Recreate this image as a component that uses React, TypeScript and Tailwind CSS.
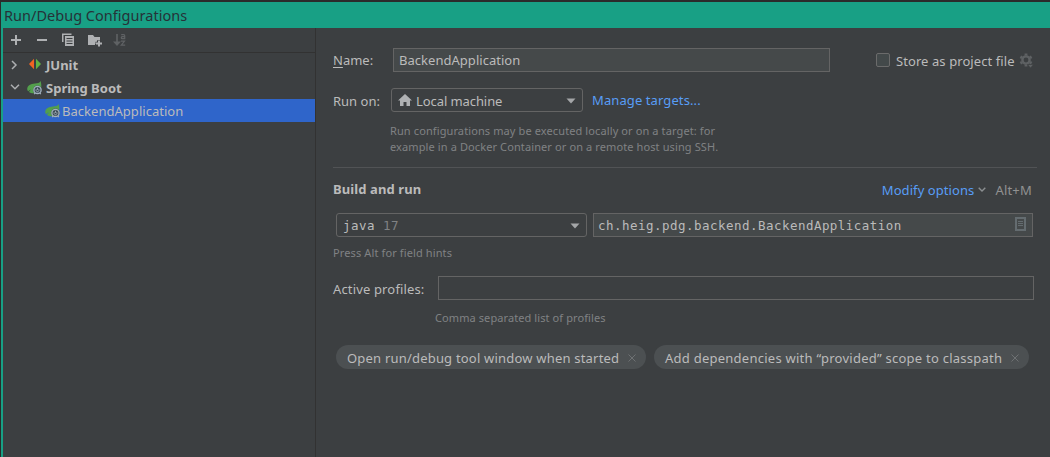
import React from "react";

function Chevron({ className = "" }: { className?: string }) {
  return (
    <svg width="10" height="6" viewBox="0 0 10 6" fill="none" className={className}>
      <path d="M1 .8l4 4 4-4" stroke="#adafb1" strokeWidth="1.5" />
    </svg>
  );
}

function SpringIcon() {
  return (
    <svg width="16" height="17" viewBox="0 0 16 17" fill="none" className="shrink-0">
      <path
        d="M13.600 2C12.600 4 10.800 4.300 8 4.500 3.500 4.800.5 6.500.2 9.800c0 1.200.4 2 1 2.500.8-.9 1.600-1.500 2.600-1.500-.9.600-1.500 1.300-1.800 2.200 1 1 2.600 1.200 4.300 1.200h4c3.900-1 4.900-7 3.300-12.200z"
        fill="#539f4c"
      />
      <circle cx="10.500" cy="10.900" r="4.300" fill="#3c4a55" />
      <circle cx="10.500" cy="10.900" r="3.600" stroke="#a3b1bd" strokeWidth="1.300" />
      <path
        d="M10.500 8.700v2.300M9.300 10.200c-.9 1.200 0 2.400 1.200 2.400s2.100-1.200 1.200-2.400"
        stroke="#a3b1bd"
        strokeWidth=".8"
      />
      <path d="M7.200 15.200l1-1.300M13.800 15.200l-1-1.300" stroke="#a3b1bd" strokeWidth="1.200" />
    </svg>
  );
}

function Caret() {
  return (
    <svg width="10" height="6" viewBox="0 0 10 6" className="mt-px mr-[6px] ml-auto shrink-0">
      <path d="M.5.5h9L5 5.500z" fill="#a4a6a8" />
    </svg>
  );
}

function Toolbar() {
  return (
    <div className="flex h-[25px] items-center border-b border-[#323232] pl-[5px]">
      <svg width="130" height="24" viewBox="0 0 130 24" fill="none">
        <path d="M3 12h10M8 7v10M29 12h10" stroke="#afb1b3" strokeWidth="2" />
        <path d="M54 14V5.500h9.500V7H55.500v7z" fill="#afb1b3" />
        <path d="M57 8h9v10h-9z" fill="#afb1b3" />
        <path d="M58.500 10.500h6M58.500 13h6M58.500 15.500h6" stroke="#3c3f41" />
        <path d="M80 7h5l1.500 2H92v4h-3v3h-2v1h-7z" fill="#afb1b3" />
        <path d="M91 12v7M87.500 15.500h7" stroke="#3c3f41" strokeWidth="3.500" />
        <path d="M91 12.500v6M88 15.500h6" stroke="#afb1b3" strokeWidth="2" />
        <path d="M109 6v10" stroke="#5f6264" strokeWidth="1.600" />
        <path d="M105 13.500h8l-4 4.500z" fill="#5f6264" />
        <path
          d="M113.200 6.700h2.500q1 0 1 1v3h-2.600c-1.100 0-1.100-2 0-2h2.600M113 13.200h3.500l-3.200 4h3.900"
          stroke="#5f6264"
          strokeWidth="1.200"
        />
      </svg>
    </div>
  );
}

function Sidebar() {
  return (
    <aside className="flex w-[313px] shrink-0 flex-col border-r border-[#323232]">
      <Toolbar />
      <div className="flex h-[23px] items-center pl-[7px] font-bold">
        <svg width="8" height="10" viewBox="0 0 8 10" fill="none">
          <path d="M2 1l4 4-4 4" stroke="#adafb1" strokeWidth="1.500" />
        </svg>
        <svg width="14" height="12" viewBox="0 0 14 12" className="mt-[-1px] ml-[10px]">
          <path d="M6 .8v10.400L1 6z" fill="#f26522" />
          <path d="M8 .8v10.400L13 6z" fill="#62b543" />
        </svg>
        <span className="mt-px ml-[4px]">JUnit</span>
      </div>
      <div className="flex h-[23px] items-center pl-[7px] font-bold">
        <Chevron className="mt-[-1px]" />
        <span className="ml-[7px] flex">
          <SpringIcon />
        </span>
        <span className="ml-[3px]">Spring Boot</span>
      </div>
      <div className="flex h-[23px] items-center bg-[#2f65ca] pl-[42px]">
        <SpringIcon />
        <span className="ml-px tracking-[0.03px]">BackendApplication</span>
      </div>
    </aside>
  );
}

function Chip({ label, className }: { label: string; className: string }) {
  return (
    <div className={"flex h-6 items-center rounded-full bg-[#4c5052] pl-[11px] " + className}>
      <span className="mt-[2px] whitespace-nowrap">{label}</span>
      <svg width="8" height="8" viewBox="0 0 8 8" className="mt-[2px] mr-[10px] ml-auto">
        <path d="M.5.5l7 7M7.500.5l-7 7" stroke="#6e7173" />
      </svg>
    </div>
  );
}

function Settings() {
  return (
    <main className="flex min-w-0 flex-1 flex-col pt-5 pl-[17px]">
      <div className="flex h-6 items-center">
        <label className="w-[60px] underline-offset-2">
          <span className="underline">N</span>ame:
        </label>
        <div className="flex h-6 w-[437px] items-center border border-[#646464] bg-[#45494a] pl-[5px] tracking-[0.03px]">
          BackendApplication
        </div>
        <span className="ml-[46px] h-[14px] w-[14px] rounded-[2px] border border-[#6b6b6b] bg-[#43494a]" />
        <span className="mt-[2px] ml-[6px] w-[122px] tracking-[0.08px] whitespace-nowrap">
          Store as project file
        </span>
        <svg width="16" height="16" viewBox="0 0 16 16" className="mt-[2px] ml-px">
          <g stroke="#5e6163" fill="none">
            <circle cx="7" cy="7" r="3.600" strokeWidth="2.400" />
            <path
              d="M7 .5v2M7 11.500v2M1.370 3.750l1.730 1M10.900 9.250l1.730 1M1.370 10.250l1.730-1M10.900 4.750l1.730-1"
              strokeWidth="2.800"
            />
          </g>
          <path d="M8.500 11.500h6L11.500 15z" fill="#5e6163" stroke="#3c3f41" strokeWidth=".6" />
        </svg>
      </div>

      <div className="mt-4 flex h-6 items-center">
        <label className="mt-[2px] w-[58px]">Run on:</label>
        <div className="flex h-6 w-[192px] items-center rounded-[3px] border border-[#646464] pl-[6px]">
          <svg width="14" height="12" viewBox="0 0 14 12" className="mt-[-1px]">
            <path d="M7 0l7 6.500h-2V12H8.500V8h-3v4H2V6.500H0z" fill="#afb1b3" />
          </svg>
          <span className="mt-[2px] ml-[4px] tracking-[-0.08px]">Local machine</span>
          <Caret />
        </div>
        <span className="ml-[9px] tracking-[0.1px] text-[#589df6]">Manage targets...</span>
      </div>

      <p className="mt-[11px] ml-[57px] text-[11px] leading-4 tracking-[0.11px] whitespace-nowrap text-[#808284]">
        Run configurations may be executed locally or on a target: for
        <br />
        example in a Docker Container or on a remote host using SSH.
      </p>

      <div className="mt-[12px] w-[704px] border-t border-[#515355]" />

      <div className="mt-[10px] flex h-6 items-center">
        <h2 className="mt-[-2px] font-bold tracking-[0.1px]">Build and run</h2>
        <span className="ml-auto tracking-[0.08px] text-[#589df6]">Modify options</span>
        <svg width="8" height="6" viewBox="0 0 8 6" fill="none" className="mt-[-1px] ml-[4px]">
          <path d="M.7.700L4 4l3.300-3.300" stroke="#8b8f91" strokeWidth="1.400" />
        </svg>
        <span className="mr-[18px] ml-[9px] tracking-[0.2px] text-[#919191]">Alt+M</span>
      </div>

      <div className="mt-[11px] flex h-6 items-center pl-[3px] font-['DejaVu_Sans_Mono',monospace] text-[12.5px] tracking-[0.47px]">
        <div className="flex h-6 w-[251px] items-center rounded-[3px] border border-[#646464] pl-[6px]">
          <span className="mt-[2px]">
            java <span className="text-[#808284]">17</span>
          </span>
          <Caret />
        </div>
        <div className="ml-[6px] flex h-6 w-[440px] items-center border border-[#646464] bg-[#45494a] pl-[4px]">
          <span className="mt-[2px]">ch.heig.pdg.backend.BackendApplication</span>
          <svg width="11" height="14" viewBox="0 0 11 14" fill="none" className="mt-[-2px] mr-[6px] ml-auto">
            <path d="M1 1h9v12H1z" stroke="#646c70" strokeWidth="2" />
            <path d="M3 4.500h5M3 6.500h5M3 8.500h5" stroke="#646c70" />
          </svg>
        </div>
      </div>

      <p className="mt-2 h-4 text-[11px] leading-4 tracking-[0.12px] text-[#808284]">
        Press Alt for field hints
      </p>

      <div className="mt-[15px] flex h-6 items-center">
        <label className="mt-[1px] w-[105px] tracking-[0.15px]">Active profiles:</label>
        <div className="h-6 w-[596px] border border-[#646464]" />
      </div>

      <p className="mt-[10px] ml-[102px] h-4 text-[11px] leading-4 tracking-[0.09px] text-[#808284]">
        Comma separated list of profiles
      </p>

      <div className="mt-[19px] flex gap-2 pl-[3px]">
        <Chip label="Open run/debug tool window when started" className="w-[310px] tracking-[0.2px]" />
        <Chip
          label="Add dependencies with “provided” scope to classpath"
          className="w-[375px] tracking-[0.25px]"
        />
      </div>
    </main>
  );
}

export default function App() {
  return (
    <div className="flex h-[457px] w-[1050px] flex-col overflow-hidden bg-[#2b2b2b] pt-[2px] pl-px font-['Noto_Sans',sans-serif] text-[13px] leading-[18px] text-[#bbbbbb]">
      <header className="flex h-[26px] shrink-0 items-center bg-[#18a085] pl-[3px] text-[14.5px] tracking-[0.02px] text-[#263238]">
        Run/Debug Configurations
      </header>
      <div className="flex min-h-0 flex-1 border-l-2 border-[#18a085] bg-[#3c3f41]">
        <Sidebar />
        <Settings />
      </div>
    </div>
  );
}
